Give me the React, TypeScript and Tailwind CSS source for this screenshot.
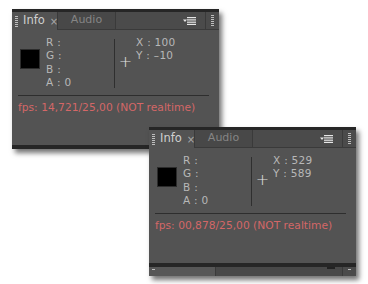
import React from 'react'

function Grip() {
  return (
    <svg width="3" height="11" viewBox="0 0 3 11" className="shrink-0">
      {[0, 2, 4, 6, 8, 10].map((y) => (
        <rect key={y} x="0" y={y} width="3" height="1" fill="#bdbdbd" />
      ))}
    </svg>
  )
}

function MenuIcon() {
  return (
    <svg width="13" height="9" viewBox="0 0 13 9">
      <path d="M0 3.5 L4 3.5 L2 6 Z" fill="#e6e6e6" />
      <rect x="4" y="1" width="9" height="1.2" fill="#e6e6e6" />
      <rect x="4" y="3.3" width="9" height="1.2" fill="#e6e6e6" />
      <rect x="4" y="5.6" width="9" height="1.2" fill="#e6e6e6" />
      <rect x="4" y="7.8" width="9" height="1.2" fill="#e6e6e6" />
    </svg>
  )
}

interface InfoPanelProps {
  x: string
  y: string
  fps: string
  footer?: boolean
}

function InfoPanel({ x, y, fps, footer }: InfoPanelProps) {
  return (
    <div className="w-[207px] bg-[#535353] shadow-[3px_4px_5px_rgba(0,0,0,0.55)]">
      {/* top bar */}
      <div className="h-[3px] bg-[#262626]" />

      {/* tabs */}
      <div className="flex h-[18px]">
        <div className="flex w-[45px] items-center bg-[#535353] pl-[3px]">
          <Grip />
          <span className="ml-[5px] text-[11.5px] text-[#cfcfcf]">Info</span>
          <span className="ml-[5px] text-[10px] text-[#a8a8a8]">×</span>
        </div>
        <div className="flex w-[59px] items-center justify-center border-b border-l border-r border-[#3a3a3a] bg-[#484848]">
          <span className="text-[11px] text-[#858585]">Audio</span>
        </div>
        <div className="flex flex-1 items-center justify-end border-b border-r border-[#3a3a3a] bg-[#4b4b4b] pr-[9px]">
          <MenuIcon />
        </div>
        <div className="flex w-[13px] items-center justify-center border-b border-[#3a3a3a] bg-[#4b4b4b]">
          <Grip />
        </div>
      </div>

      {/* body */}
      <div className="flex h-[115px] flex-col text-[10.5px] text-[#b8b8b8]">
        <div className="mt-[9px] flex h-[49px]">
          <div className="ml-[8px] mt-[10px] h-[20px] w-[20px] border border-[#2c2c2c] bg-black" />
          <div className="-mt-[3px] ml-[6px] w-[68px] leading-[13.4px] tracking-[0.3px]">
            <div>R :</div>
            <div>G :</div>
            <div>B :</div>
            <div>A : 0</div>
          </div>
          <div className="h-full w-px bg-[#2f2f2f]" />
          <div className="flex w-[21px] justify-center pt-[17px] text-[16px] leading-[12px] font-light text-[#e0e0e0]">
            +
          </div>
          <div className="-mt-[3px] leading-[13.4px] tracking-[0.3px]">
            <div>X : {x}</div>
            <div>Y : {y}</div>
          </div>
        </div>
        <div className="ml-[6px] mr-[10px] mt-[7px] h-px bg-[#2e2e2e]" />
        <div className="mt-[5px] pl-[6px] text-[10.7px] leading-[14px] text-[#d46767]">
          fps: {fps} (NOT realtime)
        </div>
      </div>

      <div className="h-[4px] bg-[#262626]" />

      {footer && (
        <div className="flex h-[9px] overflow-hidden">
          <div className="flex w-[66px] items-start bg-[#575757] pl-[3px] pt-[2px]">
            <div className="h-[1px] w-[3px] bg-[#bdbdbd]" />
          </div>
          <div className="flex flex-1 justify-end border-l border-r border-[#3a3a3a] bg-[#484848] pr-[7px]">
            <div className="h-[2px] w-[8px] bg-[#222]" />
          </div>
          <div className="flex w-[13px] justify-center bg-[#4b4b4b] pt-[2px]">
            <div className="h-[1px] w-[3px] bg-[#bdbdbd]" />
          </div>
        </div>
      )}
    </div>
  )
}

export default function App() {
  return (
    <div
      className="relative h-[284px] w-[368px] overflow-hidden bg-white"
      style={{ fontFamily: '"DejaVu Sans", "Noto Sans", sans-serif' }}
    >
      <div className="absolute left-[12px] top-[9px]">
        <InfoPanel x="100" y="–10" fps="14,721/25,00" />
      </div>
      <div className="absolute left-[149px] top-[127px]">
        <InfoPanel x="529" y="589" fps="00,878/25,00" footer />
      </div>
    </div>
  )
}
